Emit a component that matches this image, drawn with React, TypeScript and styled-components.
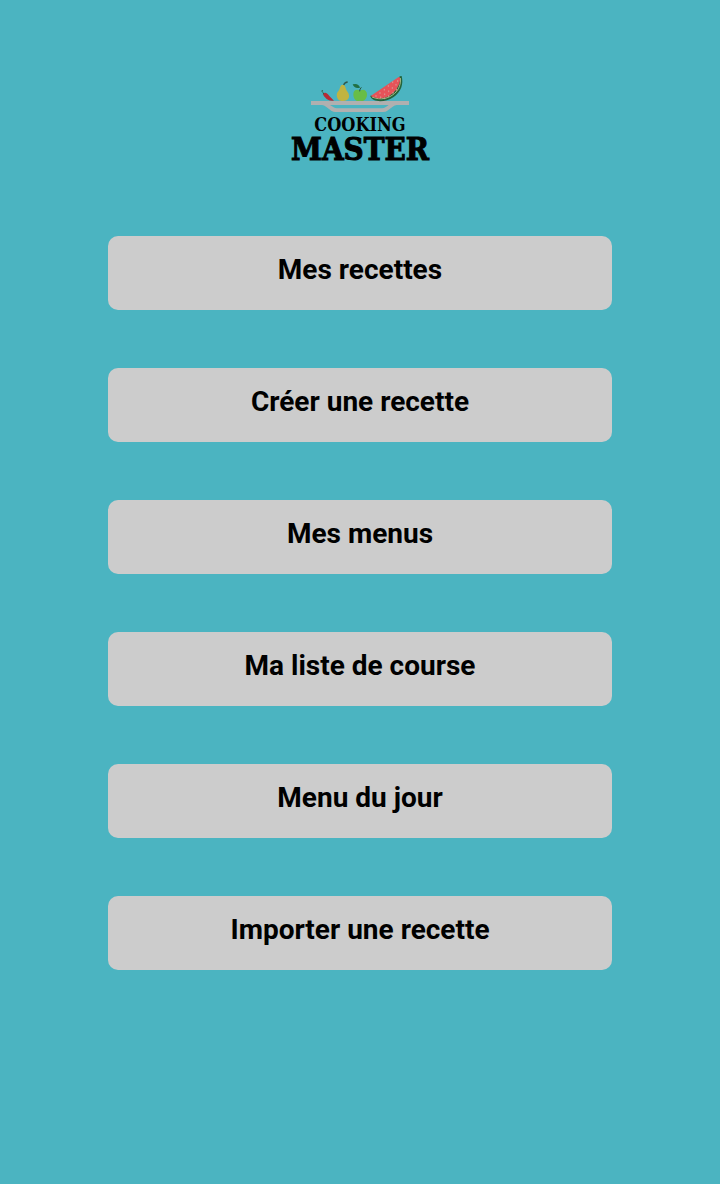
import React from "react";
import styled, { createGlobalStyle } from "styled-components";

const GlobalStyle = createGlobalStyle`
  * { box-sizing: border-box; }
  body {
    margin: 0;
    background: #4bb4c1;
    color: #000;
    font-family: Roboto, "Liberation Sans", sans-serif;
  }
`;

const Screen = styled.main`
  display: flex;
  flex-direction: column;
  align-items: center;
  min-height: 100vh;
  padding: 72px 0 58px;
`;

const Brand = styled.h1`
  display: flex;
  flex-direction: column;
  align-items: center;
  margin: 0 0 74px;
  font-family: "DejaVu Serif Condensed", "DejaVu Serif", serif;
  font-weight: 700;
`;

const BrandArt = styled.svg`
  display: block;
  width: 100px;
  height: 42px;
`;

const BrandLine = styled.span<{ $large?: boolean }>`
  font-size: ${({ $large }) => ($large ? 31 : 18)}px;
  line-height: ${({ $large }) => ($large ? 26 : 22)}px;
  -webkit-text-stroke: ${({ $large }) => ($large ? "1px #000" : "0")};
`;

const Menu = styled.nav`
  display: flex;
  flex-direction: column;
  gap: 58px;
  width: 70%;
`;

const MenuButton = styled.button`
  width: 100%;
  padding: 18px 16px 24px;
  border: 0;
  border-radius: 10px;
  background: #ccc;
  color: #000;
  font-family: inherit;
  font-size: 28px;
  font-weight: 700;
  line-height: 32px;
  cursor: pointer;
`;

const entries = [
  "Mes recettes",
  "Créer une recette",
  "Mes menus",
  "Ma liste de course",
  "Menu du jour",
  "Importer une recette",
];

const seeds = [
  [338, 52], [348, 59], [325, 63], [337, 69], [350, 74], [313, 74],
  [326, 79], [339, 83], [300, 84], [314, 88], [326, 93], [288, 93],
  [302, 97], [314, 100], [353, 48],
];

function FruitPlate() {
  return (
    <BrandArt viewBox="90 21 300 126" aria-hidden="true">
      <path d="M93 108H387V120H350Q344 120 338 125L322 137Q317 141 309 141H167Q159 141 154 137L138 125Q132 120 126 120H93Z" fill="#b0b0b0" />
      <path d="M150 120H326Q321 124 316 127Q312 130 306 130H171Q165 130 161 127Z" fill="#4bb4c1" />
      <path d="M129 86C136 80 143 86 148 93L162 107C149 109 141 104 135 97Q130 92 129 86Z" fill="#b52b36" />
      <path d="M130 88Q132 83 128 82Q125 80 127 75" fill="none" stroke="#345944" strokeWidth="3" />
      <path d="M189 59C181 58 180 70 177 76C169 84 169 91 172 99C175 107 181 108 190 108C202 108 208 101 207 91C206 82 199 79 197 70C196 64 194 60 189 59Z" fill="#c0b441" />
      <path d="M191 60Q194 52 203 51" fill="none" stroke="#31594b" strokeWidth="4" />
      <path d="M240 77C230 70 219 76 220 89C221 103 229 111 240 107C251 112 261 102 261 88C260 75 250 71 240 77Z" fill="#68bd46" />
      <path d="M239 79Q239 72 244 67" fill="none" stroke="#25573a" strokeWidth="3" />
      <path d="M218 58Q235 53 240 68Q224 73 218 58Z" fill="#217044" />
      <path d="M271 94C278 113 315 113 340 97C364 81 371 57 365 33L359 34C352 65 320 93 271 92Z" fill="#23643b" />
      <path d="M276 96C303 107 326 100 343 86C358 73 363 55 361 39" fill="none" stroke="#a4ba84" strokeWidth="3" />
      <path d="M273 92L356 36Q361 34 360 47C356 69 340 88 318 97Q294 105 273 94Z" fill="#e65359" />
      {seeds.map(([x, y]) => (
        <ellipse key={`${x}-${y}`} cx={x} cy={y} rx="2" ry="3" fill="#d98f8b" />
      ))}
    </BrandArt>
  );
}

export default function App() {
  return (
    <>
      <GlobalStyle />
      <Screen>
        <Brand>
          <FruitPlate />
          <BrandLine>COOKING</BrandLine>
          <BrandLine $large>MASTER</BrandLine>
        </Brand>
        <Menu aria-label="Menu principal">
          {entries.map((label) => (
            <MenuButton key={label} type="button">{label}</MenuButton>
          ))}
        </Menu>
      </Screen>
    </>
  );
}
